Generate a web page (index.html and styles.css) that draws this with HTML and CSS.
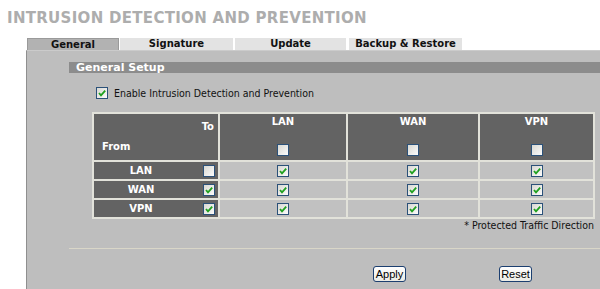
FILE: index.html
```html
<!DOCTYPE html>
<html lang="en">
<head>
<meta charset="UTF-8" />
<meta name="viewport" content="width=device-width, initial-scale=1.0" />
<title>Intrusion Detection and Prevention</title>
<link rel="stylesheet" href="styles.css">
</head>
<body>
  <h1 class="page-title">INTRUSION DETECTION AND PREVENTION</h1>

  <div class="tabs">
    <div class="tab active">General</div>
    <div class="tab tab-sig">Signature</div>
    <div class="tab tab-upd">Update</div>
    <div class="tab tab-bak">Backup &amp; Restore</div>
  </div>

  <div class="panel">
    <div class="section-head">General Setup</div>

    <label class="enable-row">
      <span class="cb on"><svg viewBox="0 0 10 10"><path d="M2 5 L4 7.3 L8.2 2.6" /></svg></span>
      Enable Intrusion Detection and Prevention
    </label>

    <table class="matrix">
      <tr>
        <th class="corner">
          <span class="to">To</span>
          <span class="from">From</span>
        </th>
        <th class="col-lan">LAN<span class="cb"></span></th>
        <th class="col-wan">WAN<span class="cb"></span></th>
        <th class="col-vpn">VPN<span class="cb"></span></th>
      </tr>
      <tr>
        <td class="row-head">LAN<span class="cb"></span></td>
        <td class="cell"><span class="cb on"><svg viewBox="0 0 10 10"><path d="M2 5 L4 7.3 L8.2 2.6" /></svg></span></td>
        <td class="cell"><span class="cb on"><svg viewBox="0 0 10 10"><path d="M2 5 L4 7.3 L8.2 2.6" /></svg></span></td>
        <td class="cell"><span class="cb on"><svg viewBox="0 0 10 10"><path d="M2 5 L4 7.3 L8.2 2.6" /></svg></span></td>
      </tr>
      <tr>
        <td class="row-head">WAN<span class="cb on"><svg viewBox="0 0 10 10"><path d="M2 5 L4 7.3 L8.2 2.6" /></svg></span></td>
        <td class="cell"><span class="cb on"><svg viewBox="0 0 10 10"><path d="M2 5 L4 7.3 L8.2 2.6" /></svg></span></td>
        <td class="cell"><span class="cb on"><svg viewBox="0 0 10 10"><path d="M2 5 L4 7.3 L8.2 2.6" /></svg></span></td>
        <td class="cell"><span class="cb on"><svg viewBox="0 0 10 10"><path d="M2 5 L4 7.3 L8.2 2.6" /></svg></span></td>
      </tr>
      <tr>
        <td class="row-head">VPN<span class="cb on"><svg viewBox="0 0 10 10"><path d="M2 5 L4 7.3 L8.2 2.6" /></svg></span></td>
        <td class="cell"><span class="cb on"><svg viewBox="0 0 10 10"><path d="M2 5 L4 7.3 L8.2 2.6" /></svg></span></td>
        <td class="cell"><span class="cb on"><svg viewBox="0 0 10 10"><path d="M2 5 L4 7.3 L8.2 2.6" /></svg></span></td>
        <td class="cell"><span class="cb on"><svg viewBox="0 0 10 10"><path d="M2 5 L4 7.3 L8.2 2.6" /></svg></span></td>
      </tr>
    </table>

    <div class="note">* Protected Traffic Direction</div>

    <div class="divider"></div>

    <div class="buttons">
      <button class="btn btn-apply">Apply</button>
      <button class="btn btn-reset">Reset</button>
    </div>
  </div>
</body>
</html>
```

FILE: styles.css
```css
body {
  margin: 0;
  background: #fff;
  font-family: "DejaVu Sans", Verdana, sans-serif;
  overflow: hidden;
}
.page-title {
  margin: 0;
  height: 38px;
  padding: 10px 0 0 7px;
  box-sizing: border-box;
  font-size: 15px;
  line-height: 16px;
  font-weight: bold;
  color: #adadad;
  letter-spacing: 0.3px;
}
.tabs {
  display: flex;
  margin-left: 27px;
  height: 12px;
}
.tab {
  height: 12px;
  line-height: 12px;
  font-size: 10px;
  font-weight: bold;
  color: #111;
  text-align: center;
  background: #e3e3e3;
  box-sizing: border-box;
}
.tab.active {
  width: 92px;
  background: #b2b2b2;
  border: 1px solid #9a9a9a;
  border-bottom: none;
  line-height: 11px;
}
.tab-sig { width: 113px; margin-left: 1px; }
.tab-upd { width: 111px; margin-left: 2px; }
.tab-bak { width: 113px; margin-left: 3px; }

.panel {
  margin-left: 26px;
  height: 239px;
  background: #bebebe;
  border-left: 1px solid #8f8f8f;
  border-top: 1px solid #cbcbcb;
  padding-left: 42px;
  box-sizing: border-box;
}
.section-head {
  margin-top: 11px;
  height: 11px;
  line-height: 11px;
  background: #8c8c8c;
  color: #fff;
  font-size: 11px;
  font-weight: bold;
  padding-left: 7px;
}
.enable-row {
  display: flex;
  align-items: center;
  margin: 14px 0 0 27px;
  height: 12px;
  font-family: "DejaVu Sans Condensed", "DejaVu Sans", sans-serif;
  font-size: 10.5px;
  color: #111;
}
.enable-row .cb {
  margin-right: 6px;
}
.cb {
  display: inline-block;
  width: 12px;
  height: 12px;
  box-sizing: border-box;
  border: 1px solid #2b5179;
  background: linear-gradient(135deg, #d8d8d2, #fbfbfb);
  vertical-align: middle;
}
.cb svg {
  display: block;
  width: 10px;
  height: 10px;
}
.cb path {
  fill: none;
  stroke: #1fa11f;
  stroke-width: 1.8;
}

.matrix {
  margin: 13px 0 0 23px;
  border-collapse: separate;
  border-spacing: 2px;
  background: #e2e2da;
  width: 503px;
}
.matrix th,
.matrix td {
  padding: 0;
}
.matrix th {
  height: 46px;
  background: #636363;
  color: #fff;
  font-size: 10px;
  font-weight: bold;
  vertical-align: top;
  text-align: center;
  line-height: 13px;
  padding-top: 1px;
  box-sizing: border-box;
}
.matrix th .cb {
  display: block;
  margin: 16px auto 0;
}
.corner {
  width: 124px;
  position: relative;
  background: linear-gradient(to top right, #636363 calc(50% - 0.7px), #a8a8a8 50%, #636363 calc(50% + 0.7px));
}
.corner .to {
  position: absolute;
  right: 4px;
  top: 6px;
}
.corner .from {
  position: absolute;
  left: 8px;
  top: 26px;
}
.col-lan { width: 126px; }
.col-wan { width: 130px; }
.matrix .row-head {
  height: 17px;
  background: #636363;
  color: #fff;
  font-size: 10px;
  font-weight: bold;
  text-align: center;
  position: relative;
  padding-right: 30px;
  box-sizing: border-box;
}
.row-head .cb {
  position: absolute;
  right: 3px;
  top: 3px;
}
.cell {
  height: 17px;
  background: #c1c1c1;
  text-align: center;
}
.cell .cb {
  display: block;
  margin: 0 auto;
}

.note {
  width: 525px;
  text-align: right;
  font-family: "DejaVu Sans Condensed", "DejaVu Sans", sans-serif;
  font-size: 10.5px;
  line-height: 12px;
  color: #111;
}
.divider {
  margin-top: 17px;
  height: 1px;
  background: #d9d6c8;
}
.buttons {
  display: flex;
  margin: 17px 0 0 304px;
}
.btn {
  height: 16px;
  width: 33px;
  padding: 0;
  font-family: "Liberation Sans", Arial, sans-serif;
  font-size: 11px;
  line-height: 13px;
  color: #000;
  background: linear-gradient(#ffffff, #ebebe4);
  border: 1px solid #1c3f70;
  border-radius: 3px;
}
.btn-reset {
  margin-left: 93px;
}
```
